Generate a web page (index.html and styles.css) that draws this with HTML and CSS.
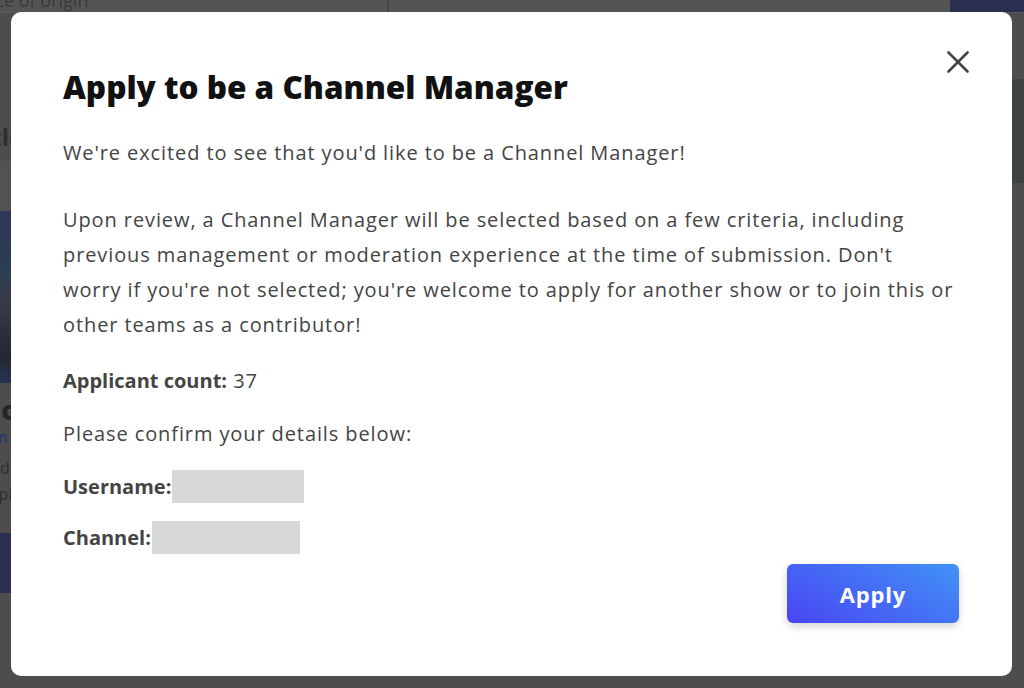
FILE: index.html
```html
<!DOCTYPE html>
<html lang="en">
<head>
  <meta charset="UTF-8" />
  <meta name="viewport" content="width=device-width, initial-scale=1.0" />
  <title>Apply to be a Channel Manager</title>
  <link rel="stylesheet" href="styles.css">
</head>
<body>
  <div class="page">
    <div class="topbar">
      <div class="topbar-left"><span class="crumb">Place of origin</span></div>
      <div class="topbar-right"><span class="topbar-action"></span></div>
    </div>
    <div class="page-body">
      <aside class="side">
        <div class="side-title">Title</div>
        <div class="side-band"></div>
        <div class="side-thumb"></div>
        <div class="side-name">Most</div>
        <div class="side-link">Learn</div>
        <div class="side-text">Add<br>Topic</div>
        <div class="side-btn"></div>
      </aside>
      <main class="main">
        <div class="main-band"></div>
      </main>
    </div>
  </div>

  <div class="modal" role="dialog" aria-labelledby="modalTitle">
    <button class="modal-close" aria-label="Close">
      <svg width="22" height="22" viewBox="0 0 22 22">
        <path d="M1.5 1.5 L20.5 20.5 M20.5 1.5 L1.5 20.5" stroke="#444" stroke-width="2.6" stroke-linecap="round" fill="none"/>
      </svg>
    </button>
    <h2 id="modalTitle">Apply to be a Channel Manager</h2>
    <p class="intro">We're excited to see that you'd like to be a Channel Manager!</p>
    <p class="details">Upon review, a Channel Manager will be selected based on a few criteria, including<br>
      previous management or moderation experience at the time of submission. Don't<br>
      worry if you're not selected; you're welcome to apply for another show or to join this or<br>
      other teams as a contributor!</p>
    <p class="count"><b>Applicant count:</b> 37</p>
    <p class="confirm">Please confirm your details below:</p>
    <div class="field"><b>Username:</b><span class="redacted redacted-user"></span></div>
    <div class="field"><b>Channel:</b><span class="redacted redacted-channel"></span></div>
    <div class="modal-footer">
      <button class="apply-btn">Apply</button>
    </div>
  </div>
</body>
</html>
```
FILE: styles.css
```css
body {
  margin: 0;
  height: 688px;
  overflow: hidden;
  background: #4d4d4d;
  font-family: 'Open Sans', 'Noto Sans', sans-serif;
}

/* dimmed page behind the dialog */
.page {
  height: 100%;
  display: flex;
  flex-direction: column;
}

.topbar {
  height: 12px;
  display: flex;
  background: #545454;
  border-bottom: 1px solid #5a5a5a;
  overflow: hidden;
}

.topbar-left {
  width: 387px;
  border-right: 2px solid #444;
  overflow: hidden;
}

.crumb {
  display: block;
  margin: -12px 0 0 -30px;
  font-size: 18px;
  color: #3a3a3a;
}

.topbar-right {
  flex: 1;
  display: flex;
  justify-content: flex-end;
}

.topbar-action {
  width: 74px;
  background: #2b2f4f;
}

.page-body {
  flex: 1;
  display: flex;
  justify-content: space-between;
}

.side {
  width: 12px;
  overflow: hidden;
  display: flex;
  flex-direction: column;
}

.side-title {
  margin: 108px 0 0 -30px;
  font-size: 24px;
  line-height: 32px;
  font-weight: 700;
  color: #2e2e2e;
}

.side-band {
  height: 50px;
  background: #525252;
  margin-top: 8px;
}

.side-thumb {
  height: 172px;
  background: linear-gradient(180deg, #2f3558 0%, #2c3f52 35%, #383a45 55%, #23272e 85%, #283455 100%);
}

.side-name {
  margin: 12px 0 0 -24px;
  font-size: 26px;
  line-height: 30px;
  font-weight: 800;
  color: #262626;
}

.side-link {
  margin: 2px 0 0 -38px;
  font-size: 16px;
  line-height: 20px;
  font-weight: 700;
  color: #2c3d66;
}

.side-text {
  margin: 8px 0 0 -20px;
  font-size: 16px;
  line-height: 26px;
  color: #2f2f2f;
}

.side-btn {
  height: 60px;
  margin-top: 26px;
  background: #2b2f4f;
}

.main {
  width: 12px;
}

.main-band {
  height: 104px;
  margin-top: 66px;
  background: #3f4343;
}

/* dialog */
.modal {
  position: fixed;
  top: 12px;
  left: 11px;
  width: 1001px;
  height: 664px;
  box-sizing: border-box;
  padding: 52px 53px 53px 52px;
  background: #fff;
  border-radius: 10px;
  display: flex;
  flex-direction: column;
  color: #444;
}

.modal-close {
  position: absolute;
  top: 39px;
  right: 43px;
  padding: 0;
  border: none;
  background: none;
  cursor: pointer;
  line-height: 0;
}

.modal h2 {
  margin: 0;
  font-size: 31.5px;
  line-height: 46px;
  font-weight: 800;
  color: #111;
}

.modal p,
.field {
  margin: 0;
  font-size: 20px;
  line-height: 35px;
  letter-spacing: 0.9px;
}

.intro {
  margin-top: 25px !important;
}

.details {
  margin-top: 32px !important;
}

.count {
  margin-top: 21px !important;
}

.confirm {
  margin-top: 18px !important;
}

.field {
  display: flex;
  align-items: center;
  margin-top: 18px;
}

.field + .field {
  margin-top: 16px;
}

.field b,
.count b {
  font-weight: 700;
  letter-spacing: 0;
}

.redacted {
  display: inline-block;
  height: 33px;
  margin-left: 1px;
  background: #d8d8d8;
}

.redacted-user {
  width: 132px;
}

.redacted-channel {
  width: 148px;
}

.modal-footer {
  margin-top: auto;
  display: flex;
  justify-content: flex-end;
}

.apply-btn {
  width: 172px;
  height: 59px;
  border: none;
  border-radius: 6px;
  background: linear-gradient(30deg, #4945f3 0%, #4192f6 100%);
  box-shadow: 0 3px 8px rgba(0, 0, 0, 0.18);
  color: #fff;
  font-family: inherit;
  font-size: 22px;
  font-weight: 700;
  letter-spacing: 0.8px;
  cursor: pointer;
}
```
